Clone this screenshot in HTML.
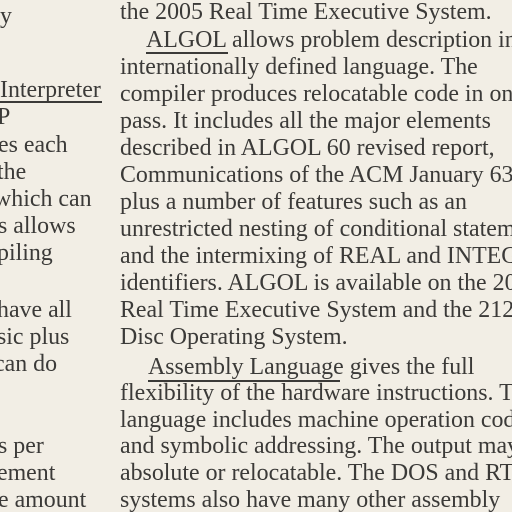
<!DOCTYPE html>
<html><head><meta charset="utf-8"><style>
html,body{margin:0;padding:0;}
body{width:512px;height:512px;overflow:hidden;background:#f2eee5;font-family:"Liberation Serif",serif;font-size:23.9px;color:#3b3a38;}
#w{position:relative;width:512px;height:512px;overflow:hidden;}
.l{position:absolute;white-space:nowrap;line-height:26px;}
.u{position:absolute;height:1.5px;background:#3b3a38;}
</style></head><body><div id="w">
<div class="l" style="left:0px;top:3px">y</div>
<div class="l" style="left:0px;top:77px">Interpreter</div>
<div class="u" style="left:0;top:101px;width:102px"></div>
<div class="l" style="left:-3px;top:104px">P</div>
<div class="l" style="left:-2px;top:132px">es each</div>
<div class="l" style="left:-3px;top:159px">the</div>
<div class="l" style="left:-6px;top:186px">which can</div>
<div class="l" style="left:-2px;top:213px">s allows</div>
<div class="l" style="left:-3px;top:240px">piling</div>
<div class="l" style="left:-3px;top:297px">have all</div>
<div class="l" style="left:-3px;top:324px">sic plus</div>
<div class="l" style="left:-6px;top:351px">can do</div>
<div class="l" style="left:-2px;top:433px">s per</div>
<div class="l" style="left:-3px;top:460px">ement</div>
<div class="l" style="left:-2px;top:487px">e amount</div>

<div class="l" style="left:120px;top:-1px">the 2005 Real Time Executive System.</div>
<div class="l" style="left:146px;top:27px">ALGOL allows problem description in</div>
<div class="u" style="left:146px;top:52px;width:82px"></div>
<div class="l" style="left:120px;top:54px">internationally defined language. The</div>
<div class="l" style="left:120px;top:81px">compiler produces relocatable code in one</div>
<div class="l" style="left:120px;top:108px">pass. It includes all the major elements</div>
<div class="l" style="left:120px;top:135px">described in ALGOL 60 revised report,</div>
<div class="l" style="left:120px;top:162px">Communications of the ACM January 63</div>
<div class="l" style="left:120px;top:189px">plus a number of features such as an</div>
<div class="l" style="left:120px;top:216px">unrestricted nesting of conditional statements</div>
<div class="l" style="left:120px;top:243px">and the intermixing of REAL and INTEGER</div>
<div class="l" style="left:120px;top:270px">identifiers. ALGOL is available on the 2005</div>
<div class="l" style="left:120px;top:297px">Real Time Executive System and the 2120</div>
<div class="l" style="left:120px;top:324px">Disc Operating System.</div>
<div class="l" style="left:148px;top:354px">Assembly Language gives the full</div>
<div class="u" style="left:148px;top:380px;width:192px"></div>
<div class="l" style="left:120px;top:380px">flexibility of the hardware instructions. The</div>
<div class="l" style="left:120px;top:407px">language includes machine operation codes</div>
<div class="l" style="left:120px;top:433px">and symbolic addressing. The output may be</div>
<div class="l" style="left:120px;top:460px">absolute or relocatable. The DOS and RTE</div>
<div class="l" style="left:120px;top:487px">systems also have many other assembly</div>
</div></body></html>
